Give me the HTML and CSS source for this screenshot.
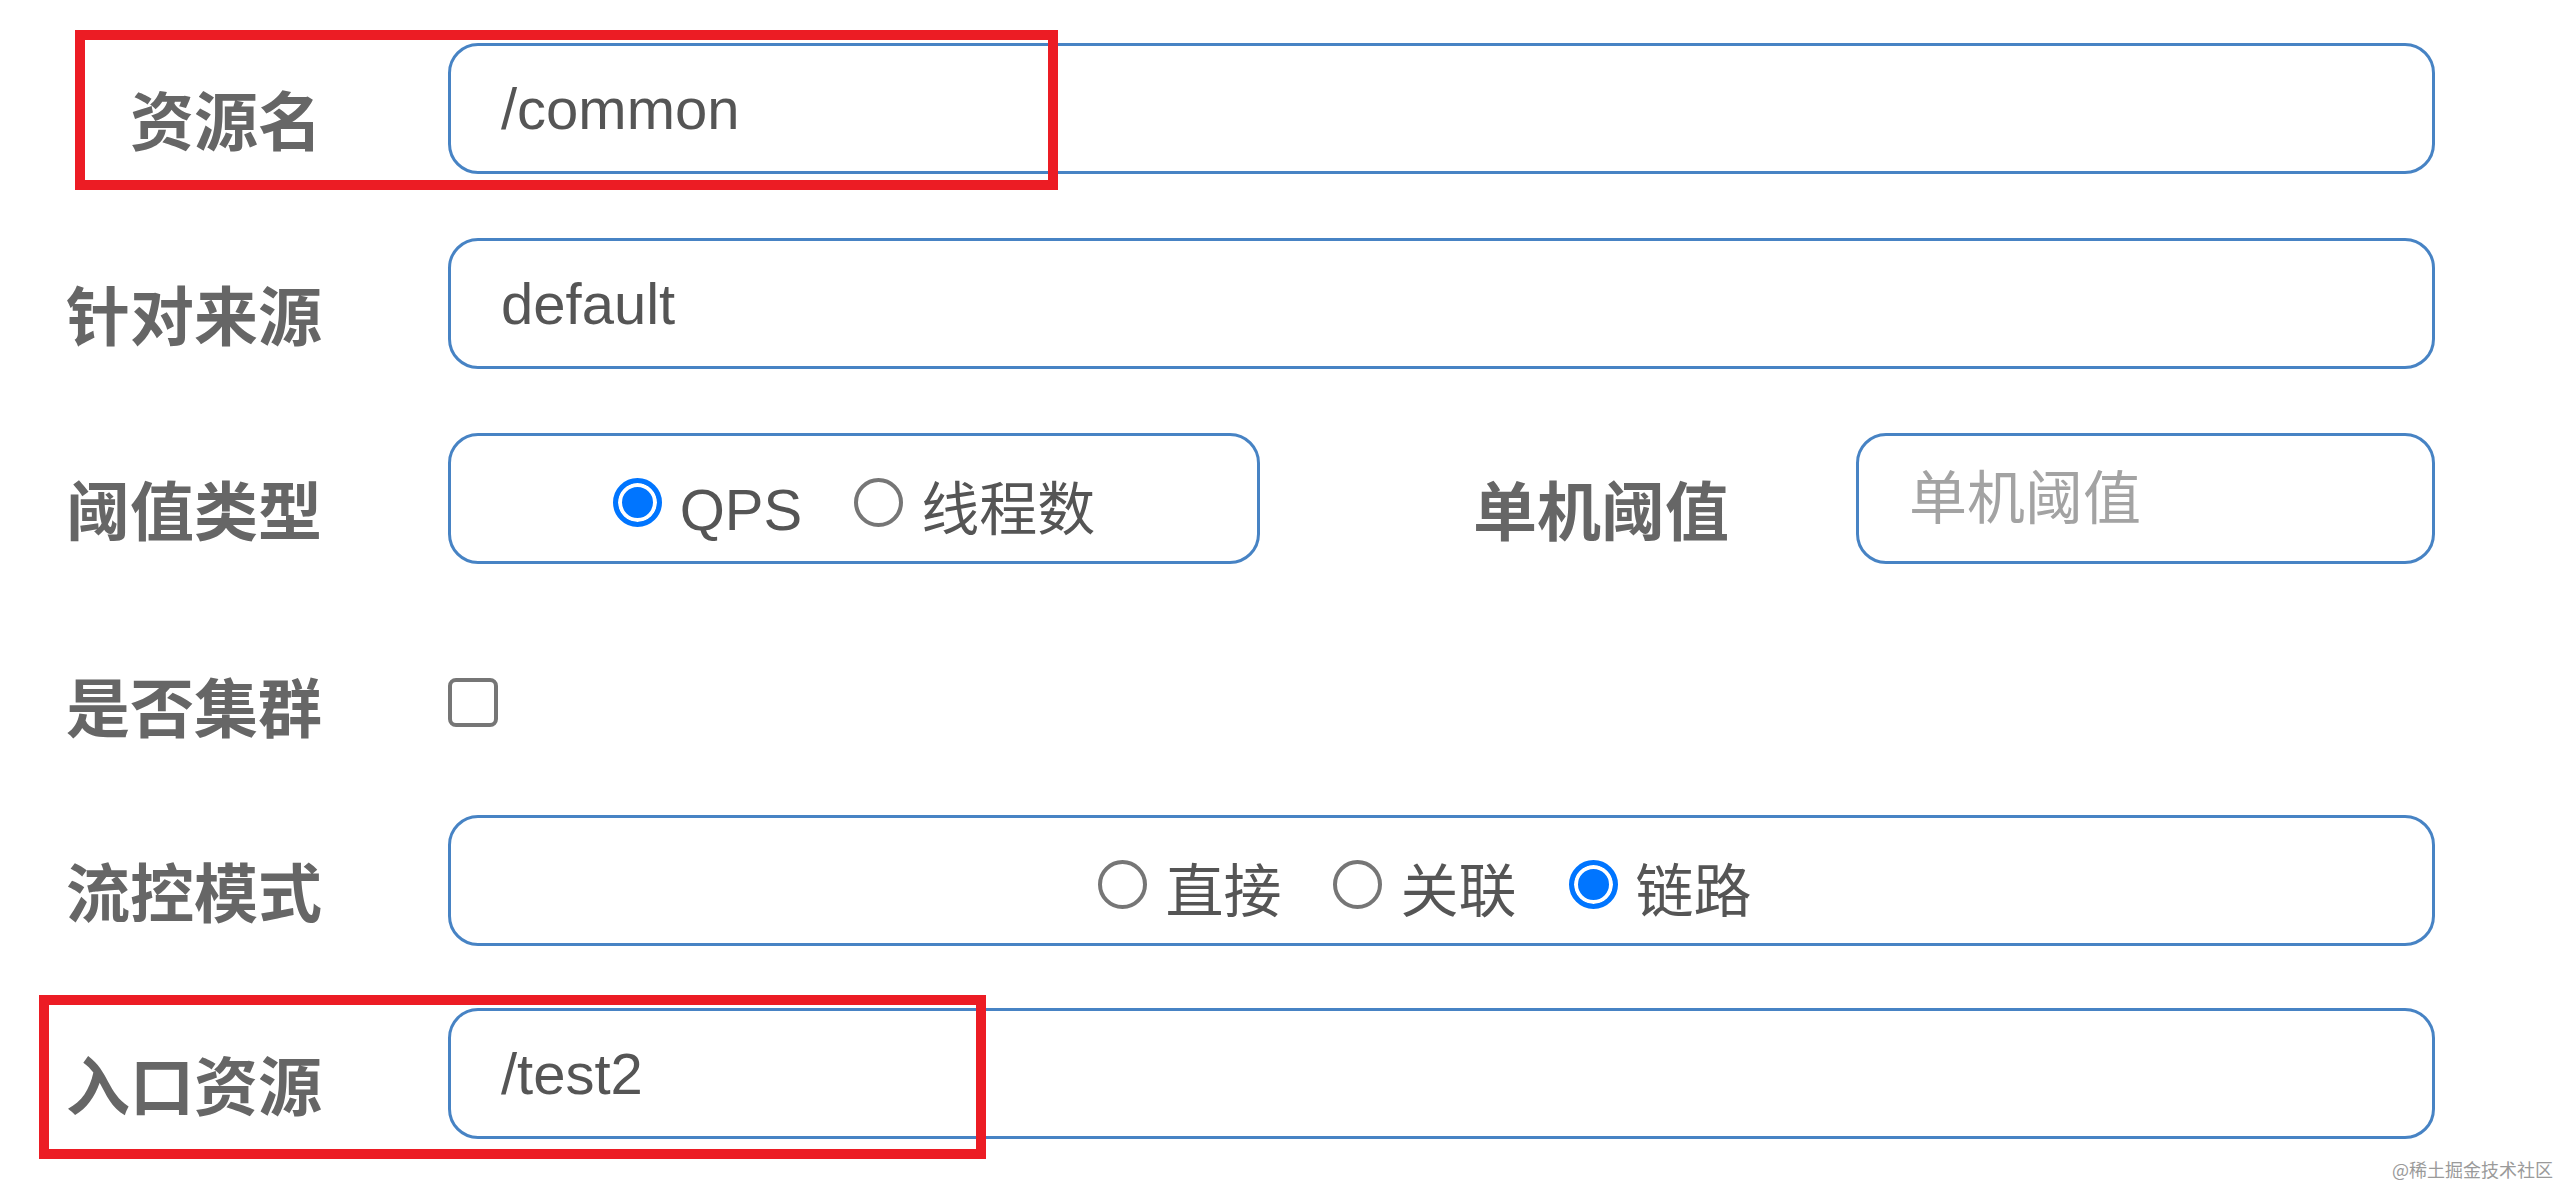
FILE: index.html
```html
<!DOCTYPE html>
<html lang="zh-CN">
<head>
<meta charset="utf-8">
<title>流控规则</title>
<link rel="stylesheet" href="styles.css">
</head>
<body>
<div class="page">
  <form class="form">
    <div class="row">
      <label class="label">资源名</label>
      <input class="field" type="text" value="/common">
    </div>
    <div class="row">
      <label class="label">针对来源</label>
      <input class="field" type="text" value="default">
    </div>
    <div class="row">
      <label class="label">阈值类型</label>
      <div class="radio-group group-short">
        <label class="opt"><input class="radio" type="radio" name="grade" checked><span class="opt-text">QPS</span></label>
        <label class="opt"><input class="radio" type="radio" name="grade"><span class="opt-text">线程数</span></label>
      </div>
      <label class="label label-inline">单机阈值</label>
      <input class="field" type="text" placeholder="单机阈值">
    </div>
    <div class="row row-check">
      <label class="label">是否集群</label>
      <input class="check" type="checkbox">
    </div>
    <div class="row row-mode">
      <label class="label">流控模式</label>
      <div class="radio-group group-wide">
        <label class="opt"><input class="radio" type="radio" name="strategy"><span class="opt-text">直接</span></label>
        <label class="opt"><input class="radio" type="radio" name="strategy"><span class="opt-text">关联</span></label>
        <label class="opt"><input class="radio" type="radio" name="strategy" checked><span class="opt-text">链路</span></label>
      </div>
    </div>
    <div class="row">
      <label class="label">入口资源</label>
      <input class="field" type="text" value="/test2">
    </div>
  </form>
  <div class="mark mark-1"></div>
  <div class="mark mark-2"></div>
  <div class="watermark">@稀土掘金技术社区</div>
</div>
</body>
</html>
```

FILE: styles.css
```css
html, body {
  margin: 0;
  padding: 0;
  background: #fff;
}

.page {
  position: relative;
  width: 2560px;
  height: 1186px;
  overflow: hidden;
  font-family: "Liberation Sans", "Noto Sans CJK SC", sans-serif;
}

.form {
  display: flex;
  flex-direction: column;
  padding: 43px 125px 0 0;
  margin: 0;
}

.row {
  display: flex;
  align-items: center;
  height: 131px;
  margin-bottom: 64px;
}

.row-mode {
  margin-bottom: 62px;
}

.label {
  flex: 0 0 322px;
  text-align: right;
  font-family: "Noto Sans CJK SC", sans-serif;
  font-weight: 700;
  font-size: 64px;
  line-height: 1;
  color: #666;
  padding-top: 16px;
  margin-right: 126px;
  white-space: nowrap;
}

.label-inline {
  flex: 0 0 auto;
  margin-left: 213px;
  margin-right: 127px;
}

.field {
  flex: 1;
  min-width: 0;
  height: 131px;
  box-sizing: border-box;
  border: 3px solid #4783c4;
  border-radius: 30px;
  padding: 0 0 0 50px;
  margin: 0;
  font-family: "Liberation Sans", "Noto Sans CJK SC", sans-serif;
  font-size: 58px;
  color: #555;
  background: #fff;
  outline: none;
}

.field::placeholder {
  color: #a3a3a3;
}

.radio-group {
  display: flex;
  align-items: center;
  justify-content: center;
  height: 131px;
  box-sizing: border-box;
  padding-top: 8px;
  border: 3px solid #4783c4;
  border-radius: 30px;
}

.group-short {
  flex: 0 0 812px;
}

.group-wide {
  flex: 1;
  padding-right: 33px;
}

.opt {
  display: flex;
  align-items: center;
  font-size: 58px;
  color: #555;
}

.opt + .opt {
  margin-left: 52px;
}

.opt-text {
  padding-top: 14px;
  line-height: 1;
}

.radio {
  appearance: none;
  -webkit-appearance: none;
  flex: 0 0 49px;
  width: 49px;
  height: 49px;
  margin: 0 18px 0 0;
  box-sizing: border-box;
  border: 4px solid #767676;
  border-radius: 50%;
  background: #fff;
}

.radio:checked {
  border: 5px solid #0075ff;
  background: #0075ff;
  box-shadow: inset 0 0 0 4px #fff;
}

.row-check {
  height: 123px;
  box-sizing: border-box;
  padding-top: 26px;
}

.row-check .label {
  padding-top: 2px;
}

.check {
  appearance: none;
  -webkit-appearance: none;
  width: 50px;
  height: 49px;
  margin: 0;
  box-sizing: border-box;
  border: 4px solid #767676;
  border-radius: 8px;
  background: #fff;
}

.mark {
  position: absolute;
  box-sizing: border-box;
  border: 10px solid #ec1c24;
}

.mark-1 {
  left: 75px;
  top: 30px;
  width: 983px;
  height: 160px;
}

.mark-2 {
  left: 39px;
  top: 995px;
  width: 947px;
  height: 164px;
}

.watermark {
  position: absolute;
  right: 7px;
  top: 1158px;
  font-family: "Noto Sans CJK SC", sans-serif;
  font-size: 18px;
  line-height: 22px;
  color: #9a9a9a;
  white-space: nowrap;
}
```
